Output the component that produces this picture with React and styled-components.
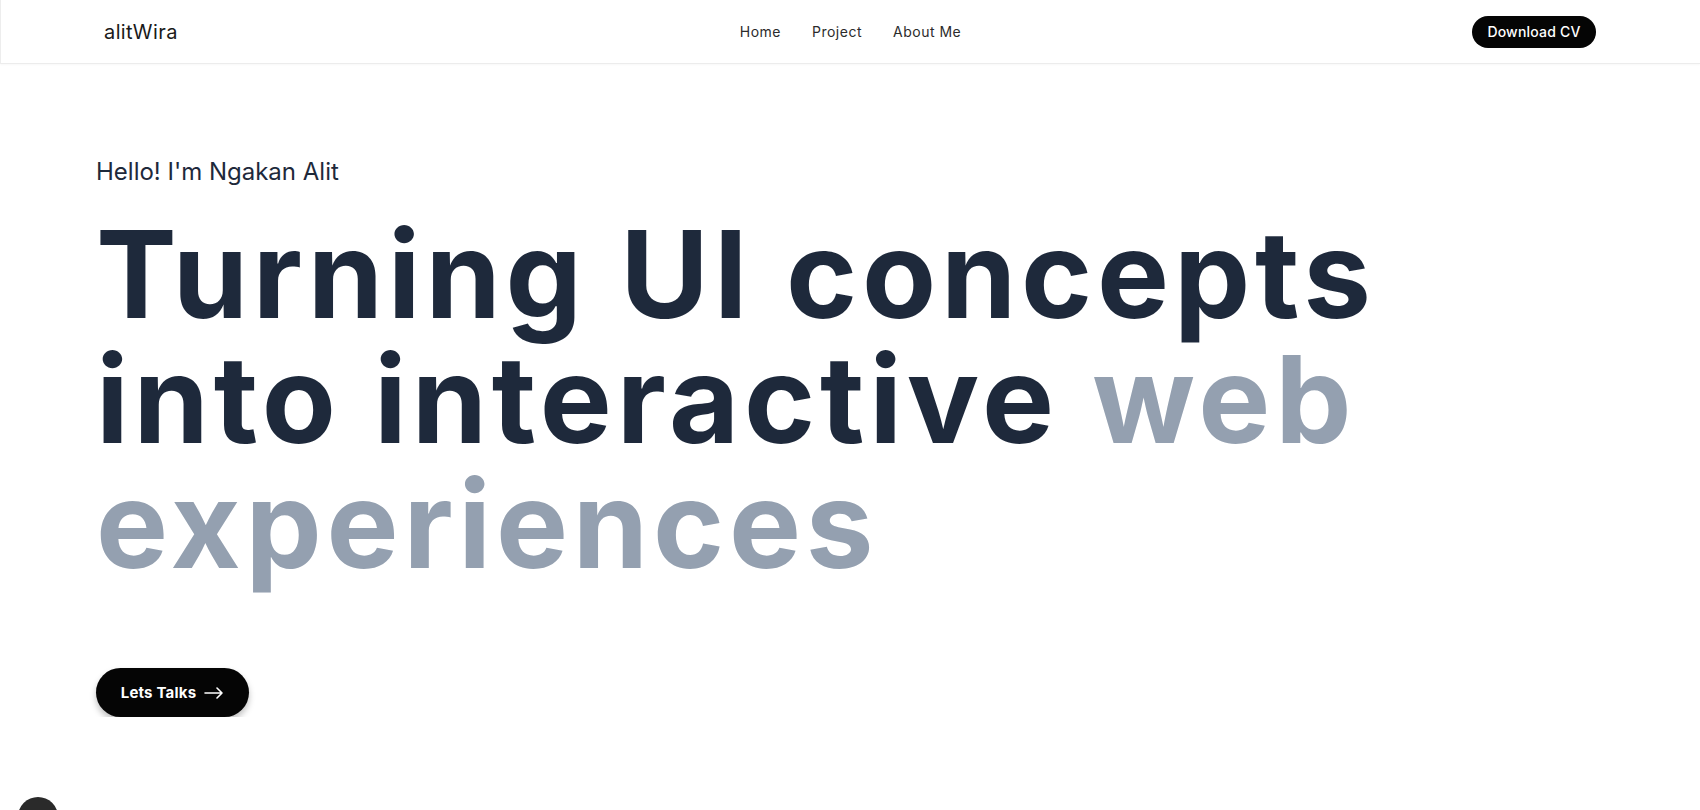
import React from "react";
import styled, { createGlobalStyle } from "styled-components";

const GlobalStyle = createGlobalStyle`
  * { box-sizing: border-box; }
  body {
    margin: 0;
    background: #ffffff;
    font-family: Inter, "Liberation Sans", sans-serif;
    color: #1e293b;
  }
`;

const Header = styled.header`
  height: 64px;
  display: flex;
  align-items: center;
  justify-content: space-between;
  padding: 0 104px 0 103px;
  border-left: 1px solid #ededed;
  border-bottom: 1px solid #ececec;
  box-shadow: 0 1px 2px rgba(0, 0, 0, 0.03);
  position: relative;
`;

const Logo = styled.div`
  font-size: 20px;
  font-weight: 400;
  color: #1a1a1a;
  letter-spacing: 0.4px;
`;

const Nav = styled.nav`
  position: absolute;
  left: 50%;
  transform: translateX(-50%);
  display: flex;
  gap: 31px;
`;

const NavLink = styled.a`
  font-size: 14px;
  color: #2b2b2b;
  text-decoration: none;
  letter-spacing: 0.5px;
`;

const PillButton = styled.button`
  border: none;
  background: #050505;
  color: #fff;
  font-family: inherit;
  border-radius: 999px;
  display: inline-flex;
  align-items: center;
  justify-content: center;
  cursor: pointer;
  font-weight: ${p => (p.$bold ? 700 : 500)};
  font-size: ${p => p.$size || "14px"};
  width: ${p => p.$w};
  height: ${p => p.$h};
  gap: 8px;
  letter-spacing: 0.2px;
  box-shadow: ${p => (p.$shadow ? "0 4px 6px rgba(0,0,0,0.25)" : "none")};
`;

const Hero = styled.section`
  padding: 93px 96px 0;
`;

const Greeting = styled.p`
  margin: 0;
  font-size: 24px;
  font-weight: 400;
  color: #1e293b;
`;

const Headline = styled.h1`
  margin: 26px 0 0;
  font-size: 121px;
  line-height: 125px;
  font-weight: 700;
  letter-spacing: 4.8px;
  white-space: nowrap;
  color: #1e293b;
`;

const Muted = styled.span`
  color: #94a0b0;
`;

const Actions = styled.div`
  margin-top: 81px;
`;

const FloatDot = styled.div`
  position: fixed;
  left: 18px;
  top: 797px;
  width: 40px;
  height: 40px;
  border-radius: 50%;
  background: #2a2a2a;
`;

const Arrow = () => (
  <svg width="20" height="12" viewBox="0 0 20 12" fill="none" stroke="#fff" strokeWidth="1.6" strokeLinecap="round" strokeLinejoin="round">
    <path d="M1 6h17M13 1l5 5-5 5" />
  </svg>
);

const App = () => (
  <>
    <GlobalStyle />
    <Header>
      <Logo>alitWira</Logo>
      <Nav>
        <NavLink href="#">Home</NavLink>
        <NavLink href="#">Project</NavLink>
        <NavLink href="#">About Me</NavLink>
      </Nav>
      <PillButton $w="124px" $h="32px">Download CV</PillButton>
    </Header>
    <Hero>
      <Greeting>Hello! I'm Ngakan Alit</Greeting>
      <Headline>
        Turning UI concepts
        <br />
        into interactive <Muted>web</Muted>
        <br />
        <Muted>experiences</Muted>
      </Headline>
      <Actions>
        <PillButton $w="153px" $h="49px" $size="15px" $bold $shadow>
          Lets Talks <Arrow />
        </PillButton>
      </Actions>
    </Hero>
    <FloatDot />
  </>
);

export default App;
